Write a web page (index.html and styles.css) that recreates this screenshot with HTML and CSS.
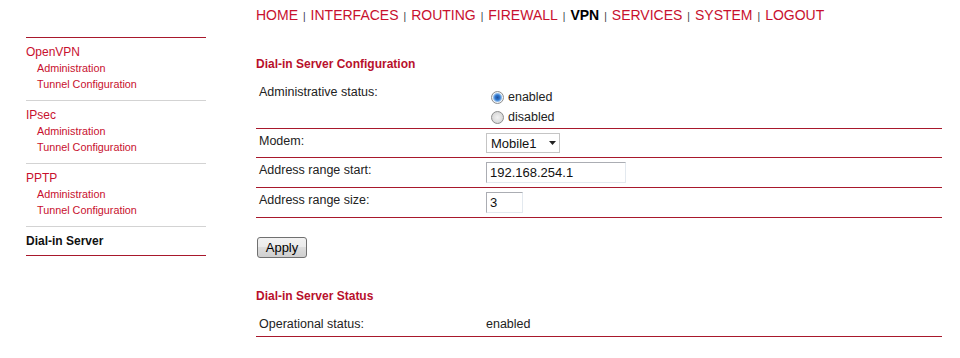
FILE: index.html
```html
<!DOCTYPE html>
<html lang="en">
<head>
  <meta charset="UTF-8">
  <meta name="viewport" content="width=device-width, initial-scale=1.0">
  <title>VPN - Dial-in Server</title>
  <link rel="stylesheet" href="styles.css">
</head>
<body>
  <div class="page">
    <div class="sidebar">
      <div class="group">
        <a class="group-title" href="#">OpenVPN</a>
        <a class="sub" href="#">Administration</a>
        <a class="sub" href="#">Tunnel Configuration</a>
      </div>
      <div class="group">
        <a class="group-title" href="#">IPsec</a>
        <a class="sub" href="#">Administration</a>
        <a class="sub" href="#">Tunnel Configuration</a>
      </div>
      <div class="group">
        <a class="group-title" href="#">PPTP</a>
        <a class="sub" href="#">Administration</a>
        <a class="sub" href="#">Tunnel Configuration</a>
      </div>
      <div class="group last">
        <span class="group-title active">Dial-in Server</span>
      </div>
    </div>

    <div class="main">
      <div class="nav">
        <a href="#">HOME</a><span class="sep">|</span>
        <a href="#">INTERFACES</a><span class="sep">|</span>
        <a href="#">ROUTING</a><span class="sep">|</span>
        <a href="#">FIREWALL</a><span class="sep">|</span>
        <span class="current">VPN</span><span class="sep">|</span>
        <a href="#">SERVICES</a><span class="sep">|</span>
        <a href="#">SYSTEM</a><span class="sep">|</span>
        <a href="#">LOGOUT</a>
      </div>

      <h2 class="section-title first">Dial-in Server Configuration</h2>
      <table class="form-table">
        <tr>
          <td class="label">Administrative status:</td>
          <td class="value radios">
            <label class="radio-line"><input type="radio" name="admin" checked>enabled</label>
            <label class="radio-line"><input type="radio" name="admin">disabled</label>
          </td>
        </tr>
        <tr>
          <td class="label">Modem:</td>
          <td class="value">
            <span class="select-wrap">
              <select class="select">
                <option>Mobile1</option>
              </select>
              <svg class="arrow" width="7" height="4" viewBox="0 0 7 4"><path d="M0 0H7L3.5 4Z" fill="#222"/></svg>
            </span>
          </td>
        </tr>
        <tr>
          <td class="label">Address range start:</td>
          <td class="value"><input class="text wide" type="text" value="192.168.254.1"></td>
        </tr>
        <tr>
          <td class="label">Address range size:</td>
          <td class="value"><input class="text narrow" type="text" value="3"></td>
        </tr>
      </table>

      <button class="btn">Apply</button>

      <h2 class="section-title">Dial-in Server Status</h2>
      <table class="form-table">
        <tr>
          <td class="label">Operational status:</td>
          <td class="value plain">enabled</td>
        </tr>
      </table>
    </div>
  </div>
</body>
</html>
```

FILE: styles.css
```css
* {
  font-family: "Liberation Sans", Arial, sans-serif;
  box-sizing: border-box;
}
body {
  margin: 0;
  background-color: #fff;
  color: #222;
}
a {
  text-decoration: none;
  color: #c8102e;
}
.page {
  display: flex;
  align-items: flex-start;
}
.sidebar {
  width: 180px;
  margin-left: 26px;
  padding-top: 37px;
}
.group {
  display: flex;
  flex-direction: column;
  border-top: 1px solid #d3d3d3;
  padding: 6px 0 8px;
}
.group:first-child {
  border-top-color: #a8182c;
}
.group.last {
  padding-bottom: 6px;
  border-bottom: 1px solid #a8182c;
}
.group-title {
  font-size: 12px;
  line-height: 16px;
}
.group-title.active {
  font-weight: bold;
  color: #111;
}
.sub {
  font-size: 10.8px;
  line-height: 16px;
  padding-left: 11px;
}
.main {
  width: 686px;
  margin-left: 50px;
  padding-top: 7px;
}
.nav {
  display: flex;
  align-items: baseline;
  height: 16px;
  line-height: 16px;
}
.nav a, .nav .current {
  font-size: 14px;
}
.nav .current {
  font-weight: bold;
  color: #000;
}
.sep {
  font-size: 10px;
  color: #333340;
  margin: 0 5px;
}
.section-title {
  margin: 30px 0 0;
  font-size: 12px;
  line-height: 16px;
  font-weight: bold;
  color: #b8102c;
}
.section-title.first {
  margin-top: 33px;
}
.form-table {
  width: 100%;
  margin-top: 8px;
  border-collapse: collapse;
}
.form-table tr {
  border-bottom: 1px solid #a8182c;
}
.form-table td {
  font-size: 12.5px;
  line-height: 16px;
  vertical-align: top;
  padding: 4px 0;
}
.form-table .label {
  width: 230px;
  padding-left: 3px;
}
.value.radios {
  padding: 7px 0 1px;
}
.radio-line {
  display: flex;
  align-items: center;
  height: 20px;
}
.radio-line input {
  appearance: none;
  width: 13px;
  height: 13px;
  margin: 0 4px 0 5px;
  border: 1px solid #8e8f8f;
  border-radius: 50%;
  background: radial-gradient(circle at 50% 50%, #f2f2f2 0, #dcdcdc 60%, #c9c9c9 100%);
}
.radio-line input:checked {
  background: radial-gradient(circle at 50% 50%, #1f4f9a 0, #2f78d0 2.5px, #8fbbea 4px, #eef3f8 5px, #d8d8d8 100%);
}
.select-wrap {
  position: relative;
  display: block;
  width: 74px;
}
.select {
  appearance: none;
  display: block;
  width: 74px;
  height: 20px;
  margin: 0;
  padding: 0 0 0 4px;
  border: 1px solid #c5c5c5;
  border-radius: 0;
  background-color: #fff;
  font-size: 13px;
  color: #111;
}
.arrow {
  position: absolute;
  left: 63px;
  top: 8px;
  pointer-events: none;
}
.text {
  display: block;
  height: 21px;
  margin: 0;
  padding: 0 3px;
  border: 1px solid;
  border-color: #abadb3 #e3e9ef #e3e9ef #abadb3;
  font-size: 13px;
  color: #111;
  outline: none;
}
.text.wide {
  width: 140px;
}
.text.narrow {
  width: 37px;
}
.btn {
  display: block;
  width: 50px;
  height: 21px;
  margin: 19px 0 0 1px;
  padding: 0;
  border: 1px solid #707070;
  border-radius: 3px;
  background: linear-gradient(#f2f2f2 0%, #ebebeb 50%, #dddddd 50%, #cfcfcf 100%);
  font-size: 13px;
  color: #000;
}
```
